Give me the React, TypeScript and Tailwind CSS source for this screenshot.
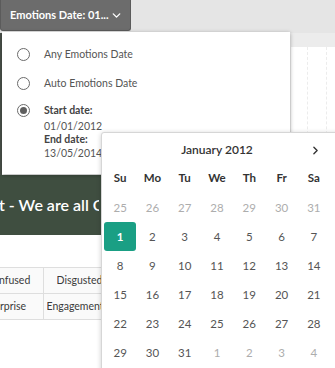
import { ChevronDown, ChevronRight } from "lucide-react";

const weeks: { d: number; muted?: boolean; selected?: boolean }[][] = [
  [25, 26, 27, 28, 29, 30, 31].map((d) => ({ d, muted: true })),
  [1, 2, 3, 4, 5, 6, 7].map((d) => ({ d, selected: d === 1 })),
  [8, 9, 10, 11, 12, 13, 14].map((d) => ({ d })),
  [15, 16, 17, 18, 19, 20, 21].map((d) => ({ d })),
  [22, 23, 24, 25, 26, 27, 28].map((d) => ({ d })),
  [29, 30, 31].map((d) => ({ d })).concat([1, 2, 3, 4].map((d) => ({ d, muted: true }))),
];

const weekdays = ["Su", "Mo", "Tu", "We", "Th", "Fr", "Sa"];

function Radio({ checked }: { checked?: boolean }) {
  return (
    <span className="w-[13px] h-[13px] rounded-full border-[1.5px] border-[#6b6b6b] flex items-center justify-center shrink-0">
      {checked && <span className="w-[7px] h-[7px] rounded-full bg-[#5f5f5f]" />}
    </span>
  );
}

export default function App() {
  return (
    <div
      className="relative w-[335px] h-[368px] overflow-hidden bg-white"
      style={{ fontFamily: "Lato, 'Open Sans', sans-serif" }}
    >
      {/* page behind */}
      <div className="h-[33px] bg-[#e5e5e5] flex items-start">
        <button className="h-[31px] w-[131px] bg-[#6c6c6c] border border-[#5b5b5b] border-t-0 rounded-b-[3px] text-white font-bold text-[11px] pl-[9px] pr-[7px] flex items-center justify-between whitespace-nowrap">
          <span>Emotions Date: 01...</span>
          <ChevronDown size={13} strokeWidth={2.5} />
        </button>
      </div>
      <div className="h-[142px] flex">
        <div className="w-[2px] bg-[#4a514a]" />
        <div className="flex-1" />
        <div className="w-[45px] border-l border-[#eeeeee] flex flex-col">
          <div className="h-[14px] bg-[#ececec]" />
          <div className="flex-1 flex border-b border-[#f0f0f0]">
            <div className="w-[17px] border-r border-dashed border-[#ececec]" />
            <div className="w-[19px] border-r border-dashed border-[#ececec]" />
          </div>
        </div>
      </div>
      <div className="h-[60px] bg-[#3f4e40] text-white text-[16px] font-semibold flex items-center">
        <span className="w-[100px] -ml-[1px] whitespace-nowrap overflow-hidden">t - We are all Owners</span>
      </div>
      <div className="h-[32px]" />
      <table className="border-collapse text-[10.5px] text-[#3a3a3a]">
        <tbody>
          <tr className="h-[26px]">
            <td className="w-[43px] border border-l-0 border-[#dedede] bg-[#fafafa] whitespace-nowrap">
              <span className="-ml-[1px]">nfused</span>
            </td>
            <td className="w-[75px] border border-[#dedede] bg-[#fafafa] pl-[13px]">
              <span className="block w-[44px] overflow-hidden whitespace-nowrap">Disgusted</span>
            </td>
          </tr>
          <tr className="h-[26px]">
            <td className="border border-l-0 border-[#dedede] bg-[#fafafa] whitespace-nowrap">rprise</td>
            <td className="border border-[#dedede] bg-[#fafafa] pl-[3px]">
              <span className="block w-[54px] overflow-hidden whitespace-nowrap">Engagement</span>
            </td>
          </tr>
        </tbody>
      </table>

      {/* dropdown menu */}
      <div className="absolute left-[2px] top-[32px] w-[288px] h-[142px] bg-white shadow-[0_1px_4px_rgba(0,0,0,0.35)] text-[10.5px] text-[#555]">
        <div className="flex items-center gap-[14px] pl-[15px] pt-[8px] h-[29px] box-content">
          <Radio />
          <span>Any Emotions Date</span>
        </div>
        <div className="flex items-center gap-[14px] pl-[15px] h-[29px]">
          <Radio />
          <span>Auto Emotions Date</span>
        </div>
        <div className="flex items-start gap-[14px] pl-[15px] pt-[6px]">
          <Radio checked />
          <div className="flex flex-col leading-[13px]">
            <span className="font-bold text-[#444]">Start date:</span>
            <span className="mt-[3px]">01/01/2012</span>
            <span className="font-bold text-[#444]">End date:</span>
            <span className="mt-[1px]">13/05/2014</span>
          </div>
        </div>
      </div>

      {/* calendar popup */}
      <div className="absolute left-[101px] top-[132px] w-[240px] h-[250px] bg-white border border-[#d6d6d6] rounded-tl-[3px] shadow-[0_1px_5px_rgba(0,0,0,0.2)] pl-[2px] text-[11.5px]">
        <div className="h-[34px] w-[226px] relative flex items-center justify-center font-semibold text-[#333] text-[12px]">
          <span>January 2012</span>
          <ChevronRight
            size={13}
            strokeWidth={2.5}
            className="absolute right-[8px] top-[11px] text-[#333]"
          />
        </div>
        <div className="grid grid-cols-7 w-[226px] h-[26px] pb-[5px] items-center text-center font-bold text-[#333]">
          {weekdays.map((w) => (
            <span key={w}>{w}</span>
          ))}
        </div>
        {weeks.map((row, i) => (
          <div key={i} className="grid grid-cols-7 w-[226px] h-[29px]">
            {row.map((c, j) => (
              <div
                key={j}
                className={
                  c.selected
                    ? "flex items-center justify-center rounded-[3px] bg-[#1a9f84] text-white font-bold"
                    : c.muted
                      ? "flex items-center justify-center text-[#adadad]"
                      : "flex items-center justify-center text-[#555]"
                }
              >
                {c.d}
              </div>
            ))}
          </div>
        ))}
      </div>
    </div>
  );
}
